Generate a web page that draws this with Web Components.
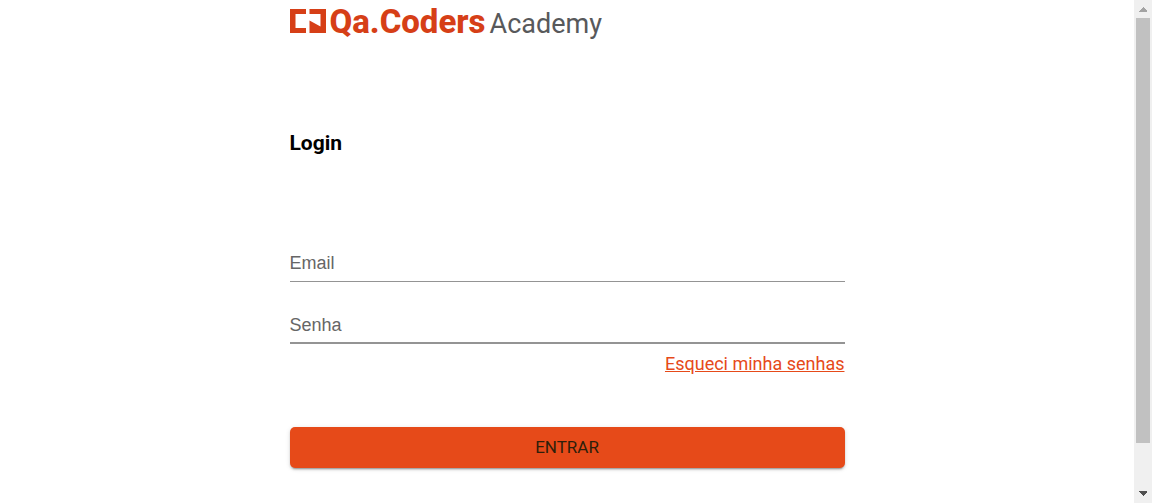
<!DOCTYPE html>
<html lang="pt-BR">
<head>
<meta charset="utf-8">
<meta name="viewport" content="width=device-width, initial-scale=1">
<title>Qa.Coders Academy</title>
<style>
html, body { margin: 0; height: 100%; background: #fff; }
body { font-family: Roboto, "Liberation Sans", sans-serif; }
</style>
</head>
<body>
<page-frame>
  <brand-logo></brand-logo>
  <login-form heading="Login">
    <text-field name="email" type="email" label="Email"></text-field>
    <text-field name="senha" type="password" label="Senha" strong></text-field>
    <text-link slot="help" href="#recuperar">Esqueci minha senhas</text-link>
    <action-button slot="actions">ENTRAR</action-button>
  </login-form>
</page-frame>
<script>
function define(name, html, setup) {
  customElements.define(name, class extends HTMLElement {
    constructor() {
      super();
      this.attachShadow({ mode: "open" }).innerHTML = html;
    }
    connectedCallback() { if (setup) setup(this, this.shadowRoot); }
  });
}

define("scroll-rail", `
<style>
:host { display: flex; flex-direction: column; flex: 0 0 18px; background: #f0f0f0; }
svg { display: block; flex: none; width: 18px; height: 18px; }
.track { flex: 1; padding: 0 2px; }
.thumb { height: 91%; background: #c1c1c1; }
</style>
<svg viewBox="0 0 18 18" shape-rendering="crispEdges"><path d="M5 12V11L9 7L13 11V12Z" fill="#a3a3a3"/></svg>
<div class="track"><div class="thumb"></div></div>
<svg viewBox="0 0 18 18" shape-rendering="crispEdges"><path d="M5 6V7L9 11L13 7V6Z" fill="#505050"/></svg>`);

define("page-frame", `
<style>
:host { display: flex; height: 100vh; overflow: hidden; }
main { flex: 1; min-width: 0; overflow: hidden; padding: 0 16px; }
.column { max-width: 555px; margin: 0 auto; }
</style>
<main><div class="column"><slot></slot></div></main>
<scroll-rail aria-hidden="true"></scroll-rail>`);

define("brand-logo", `
<style>
:host { display: flex; align-items: baseline; height: 44px; line-height: 44px; white-space: nowrap; }
svg { width: 36px; height: 24px; margin-right: 4px; }
.name { color: #d63f17; font-size: 33px; font-weight: 800; }
.suffix { color: #58595b; font-size: 27px; font-weight: 400; margin-left: 4px; }
</style>
<svg viewBox="0 0 36 24" aria-hidden="true" fill="#d63f17">
<path d="M0 0H16V5H5.5V19H16V24H0Z"/>
<path d="M19.5 0H36V24H19.5V11.5L30.5 17.5V5H19.5Z"/>
</svg>
<span class="name">Qa.Coders</span><span class="suffix">Academy</span>`);

define("login-form", `
<style>
:host { display: block; padding-top: 85px; }
h1 { margin: 0 0 86px; font-size: 21px; line-height: 28px; font-weight: 700; color: #000; }
.fields { display: flex; flex-direction: column; gap: 23px; }
.help { display: flex; justify-content: flex-end; margin: 8px 0 51px; }
</style>
<form>
<h1></h1>
<div class="fields"><slot></slot></div>
<div class="help"><slot name="help"></slot></div>
<slot name="actions"></slot>
</form>`, (el, root) => {
  root.querySelector("h1").textContent = el.getAttribute("heading");
});

define("text-field", `
<style>
:host { display: block; position: relative; box-sizing: border-box; height: 39px; border-bottom: 1px solid #949494; }
:host([strong]) { border-bottom-width: 2px; }
label { position: absolute; left: 0; top: 8px; font: 18px/24px "Liberation Sans", Arial, sans-serif; color: #666; pointer-events: none; }
input { display: block; box-sizing: border-box; width: 100%; height: 100%; padding: 8px 0 4px; border: 0; outline: 0; background: transparent; font: 18px/24px "Liberation Sans", Arial, sans-serif; }
input:not(:placeholder-shown) + label { display: none; }
</style>
<input id="control" placeholder=" "><label for="control"></label>`, (el, root) => {
  const input = root.querySelector("input");
  input.type = el.getAttribute("type");
  input.name = el.getAttribute("name");
  root.querySelector("label").textContent = el.getAttribute("label");
});

define("text-link", `
<style>
:host { display: block; }
a { display: block; font-size: 18px; line-height: 24px; color: #e64a19; text-decoration: underline; }
</style>
<a><slot></slot></a>`, (el, root) => {
  root.querySelector("a").href = el.getAttribute("href");
});

define("action-button", `
<style>
:host { display: block; }
button { display: block; width: 100%; padding: 8px 16px; border: 0; border-radius: 5px; background: #e64a19; color: #2e1f0a; font: 400 17px/25px Roboto, "Liberation Sans", sans-serif; box-shadow: 0 3px 1px -2px rgba(0,0,0,.2), 0 2px 2px rgba(0,0,0,.14), 0 1px 5px rgba(0,0,0,.12); cursor: pointer; }
</style>
<button type="button"><slot></slot></button>`);
</script>
</body>
</html>
